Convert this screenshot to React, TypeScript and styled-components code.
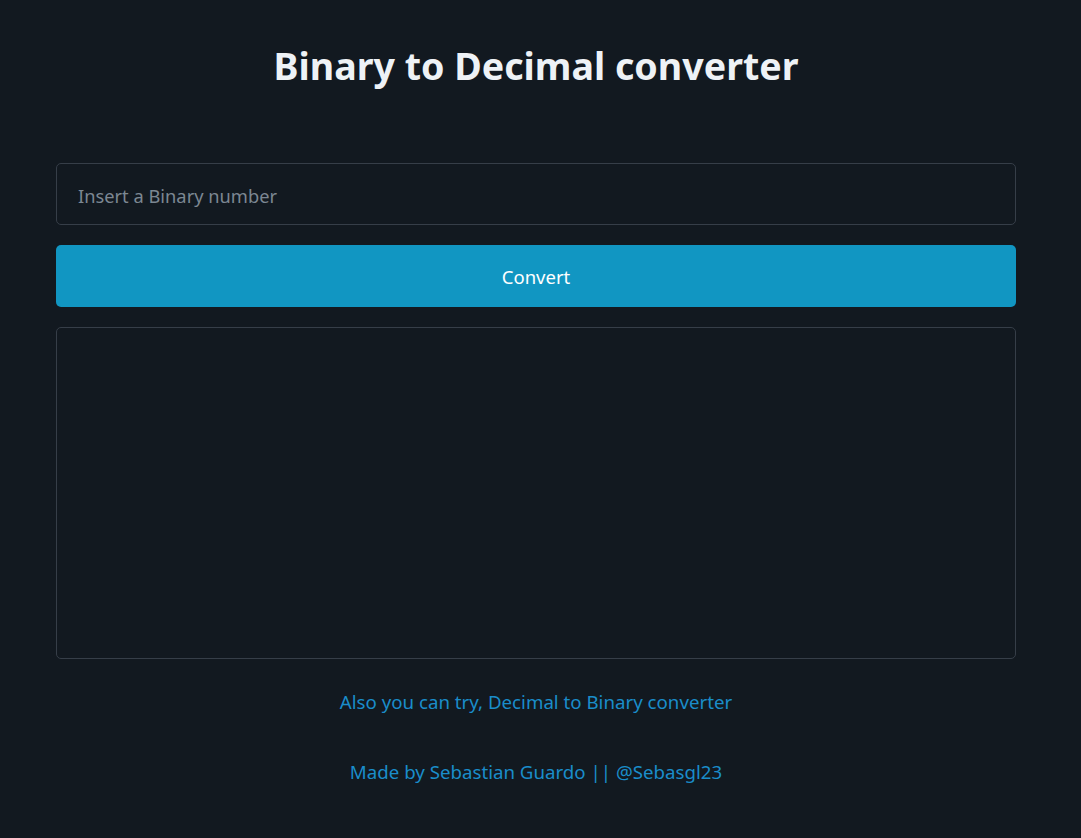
import React from "react";
import styled, { createGlobalStyle } from "styled-components";

const Global = createGlobalStyle`
  html, body { margin: 0; padding: 0; background: #121920; }
  body { font-family: "Noto Sans", "Open Sans", sans-serif; color: #eef2f6; }
  * { box-sizing: border-box; }
`;

const Page = styled.div`
  width: 1072px;
  min-height: 838px;
  padding-top: 37px;
`;

const Container = styled.main`
  width: 960px;
  margin: 0 auto;
  display: flex;
  flex-direction: column;
  align-items: stretch;
`;

const Title = styled.h1`
  margin: 0 0 68px;
  text-align: center;
  font-size: 37.6px;
  font-weight: 700;
  line-height: 58px;
  color: #eef2f6;
`;

const Form = styled.div`
  display: flex;
  flex-direction: column;
  gap: 20px;
`;

const Input = styled.input`
  height: 62px;
  width: 100%;
  background: transparent;
  border: 1px solid #363e48;
  border-radius: 5px;
  padding: 2px 21px 0;
  font-family: inherit;
  font-size: 18.3px;
  color: #e6edf3;
  outline: none;
  &::placeholder { color: #7c8792; }
`;

const Button = styled.button`
  height: 62px;
  width: 100%;
  border: none;
  border-radius: 5px;
  background: #1196c2;
  color: #ffffff;
  font-family: inherit;
  font-size: 18.5px;
  cursor: pointer;
`;

const Result = styled.div`
  height: 332px;
  border: 1px solid #363e48;
  border-radius: 5px;
`;

const LinkText = styled.a<{ $top: number }>`
  display: block;
  text-align: center;
  margin-top: ${(p) => p.$top}px;
  font-size: 18.7px;
  line-height: 28px;
  color: #1a8dca;
  text-decoration: none;
`;

export default function App() {
  return (
    <>
      <Global />
      <Page>
        <Container>
          <Title>Binary to Decimal converter</Title>
          <Form>
            <Input placeholder="Insert a Binary number" />
            <Button>Convert</Button>
            <Result />
          </Form>
          <LinkText href="#" $top={29}>Also you can try, Decimal to Binary converter</LinkText>
          <LinkText href="#" $top={42}>Made by Sebastian Guardo || @Sebasgl23</LinkText>
        </Container>
      </Page>
    </>
  );
}
